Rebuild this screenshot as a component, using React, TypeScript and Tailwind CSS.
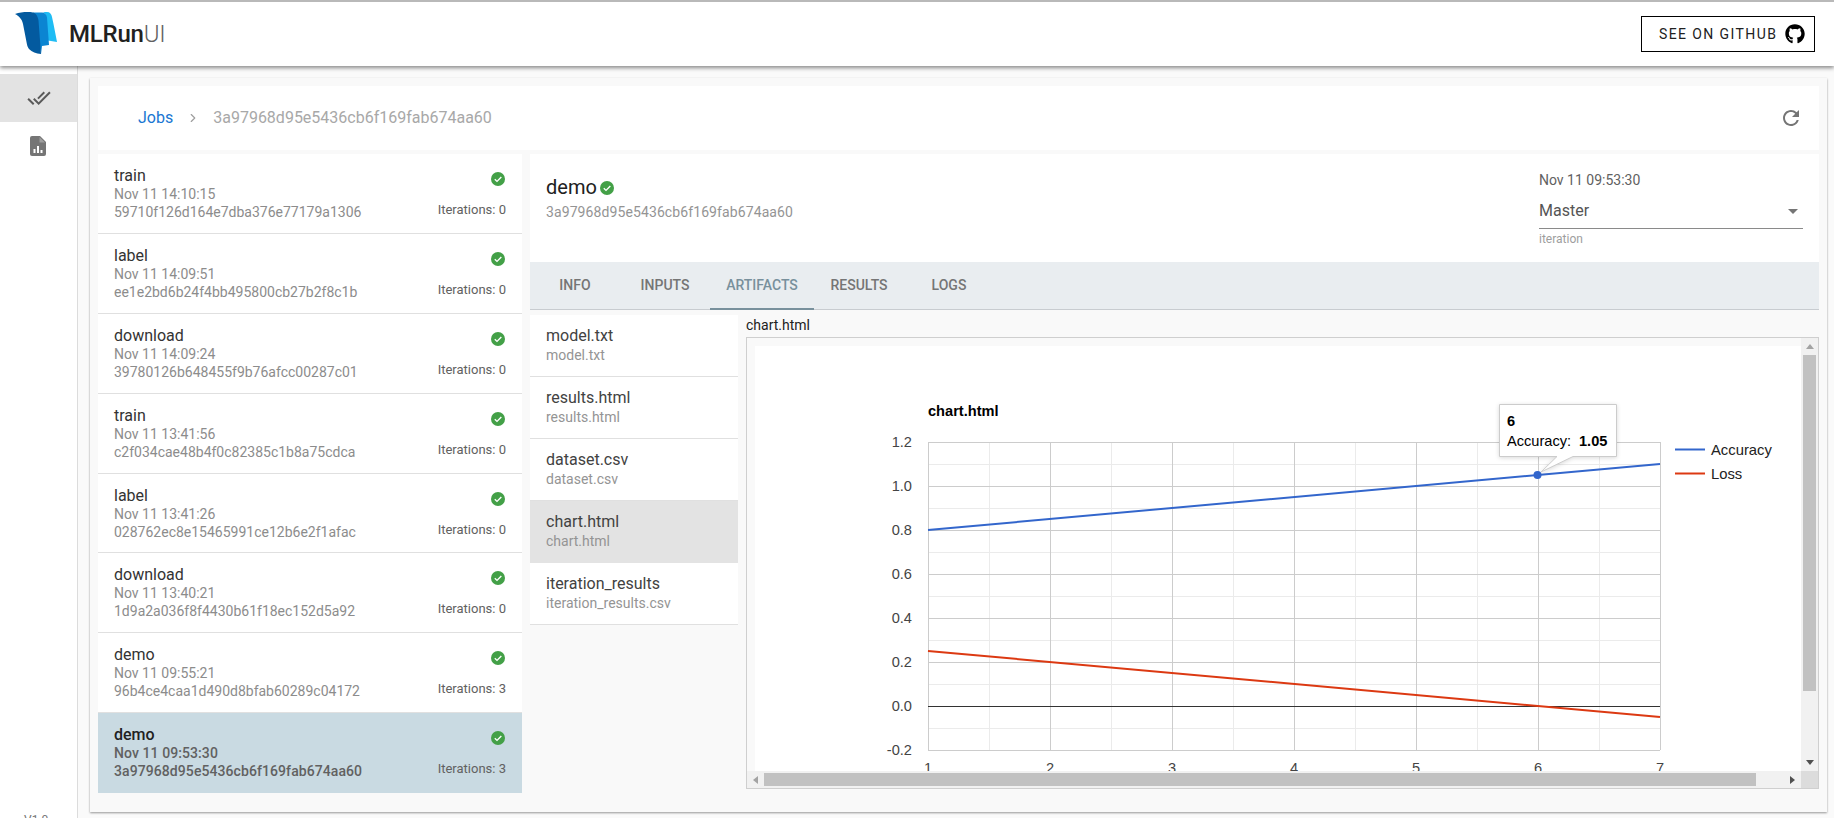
import { ChevronRight } from "lucide-react";
import { FaGithub } from "react-icons/fa";
import { MdDoneAll, MdRefresh } from "react-icons/md";

const JOBS = [
  { name: "train", date: "Nov 11 14:10:15", uid: "59710f126d164e7dba376e77179a1306", iter: 0 },
  { name: "label", date: "Nov 11 14:09:51", uid: "ee1e2bd6b24f4bb495800cb27b2f8c1b", iter: 0 },
  { name: "download", date: "Nov 11 14:09:24", uid: "39780126b648455f9b76afcc00287c01", iter: 0 },
  { name: "train", date: "Nov 11 13:41:56", uid: "c2f034cae48b4f0c82385c1b8a75cdca", iter: 0 },
  { name: "label", date: "Nov 11 13:41:26", uid: "028762ec8e15465991ce12b6e2f1afac", iter: 0 },
  { name: "download", date: "Nov 11 13:40:21", uid: "1d9a2a036f8f4430b61f18ec152d5a92", iter: 0 },
  { name: "demo", date: "Nov 11 09:55:21", uid: "96b4ce4caa1d490d8bfab60289c04172", iter: 3 },
  { name: "demo", date: "Nov 11 09:53:30", uid: "3a97968d95e5436cb6f169fab674aa60", iter: 3, active: true },
];

const ARTIFACTS = [
  { name: "model.txt", path: "model.txt" },
  { name: "results.html", path: "results.html" },
  { name: "dataset.csv", path: "dataset.csv" },
  { name: "chart.html", path: "chart.html", active: true },
  { name: "iteration_results", path: "iteration_results.csv" },
];

const TABS = [
  { label: "INFO", w: "w-[90px]" },
  { label: "INPUTS", w: "w-[90px]" },
  { label: "ARTIFACTS", w: "w-[104px]" },
  { label: "RESULTS", w: "w-[90px]" },
  { label: "LOGS", w: "w-[90px]" },
];

function StatusDot({ className }: { className?: string }) {
  return (
    <svg viewBox="0 0 24 24" className={className}>
      <circle cx="12" cy="12" r="12" fill="#43a047" />
      <path d="M6.5 12.5l3.8 3.6 7.4-7.4" fill="none" stroke="#fff" strokeWidth="2.4" />
    </svg>
  );
}

function Logo() {
  return (
    <svg viewBox="0 0 42 44" className="h-[44px] w-[42px] shrink-0">
      <path d="M28 0h4c3 0 4.500 2 5 5C39 14 40.500 22 42 30l-9-1.500L31 5c-.5-3-1.500-4.500-3-5z" fill="#1fbcf4" />
      <path d="M18 .5h9c3 0 4.500 2 5 5l2 27.500-7 1-1 8z" fill="#0b85d2" />
      <path d="M0 2C6 0 13-.5 18 .5c3 .8 5 4 5.500 8L26 42c-5-.5-9-2-12-5-1.500-2-2-4-2.500-7L8 12C7 7 4 4 0 2z" fill="#035a9f" />
    </svg>
  );
}

function ReportIcon() {
  return (
    <svg viewBox="0 0 16 20" className="-ml-px h-[20px] w-[16px]">
      <path d="M2 0h8l6 6v12a2 2 0 0 1-2 2H2a2 2 0 0 1-2-2V2a2 2 0 0 1 2-2z" fill="#757575" />
      <path d="M3.500 13h2v4h-2zM7 10h2v7H7zM10.500 14h2v3h-2z" fill="#fff" />
      <path d="M9.500 1v5.500H15z" fill="#9e9e9e" />
    </svg>
  );
}

const X_MAJOR = [928, 1050, 1172, 1294, 1416, 1538, 1660];
const X_MINOR = [989, 1111, 1233, 1355, 1477, 1599];
const Y_MAJOR = [442, 486, 530, 574, 618, 662, 750];
const Y_MINOR = [464, 508, 552, 596, 640, 684, 728];
const Y_LABELS = ["1.2", "1.0", "0.8", "0.6", "0.4", "0.2", "0.0", "-0.2"];

// viewBox uses page coordinates, the white iframe body starts at 755,346
function Chart() {
  return (
    <svg width="1046" height="425" viewBox="755 346 1046 425" className="block bg-white font-['Liberation_Sans',Arial,sans-serif]">
      <text x="928" y="416" fontSize="14.6" fontWeight="700" fill="#000">chart.html</text>
      {X_MINOR.map((x) => (
        <line key={x} x1={x + 0.5} x2={x + 0.5} y1="442" y2="750" stroke="#ebebeb" />
      ))}
      {Y_MINOR.map((y) => (
        <line key={y} x1="928" x2="1660" y1={y + 0.5} y2={y + 0.5} stroke="#ebebeb" />
      ))}
      {X_MAJOR.map((x) => (
        <line key={x} x1={x + 0.5} x2={x + 0.5} y1="442" y2="750" stroke="#cccccc" />
      ))}
      {Y_MAJOR.map((y) => (
        <line key={y} x1="928" x2="1660" y1={y + 0.5} y2={y + 0.5} stroke="#cccccc" />
      ))}
      <line x1="928" x2="1660" y1="706.5" y2="706.5" stroke="#333333" />
      {Y_LABELS.map((t, i) => (
        <text key={t} x="912" y={447 + i * 44} fontSize="14.6" textAnchor="end" fill="#444">{t}</text>
      ))}
      {X_MAJOR.map((x, i) => (
        <text key={x} x={x} y="773" fontSize="14.6" textAnchor="middle" fill="#444">{i + 1}</text>
      ))}
      <line x1="928" x2="1660" y1="530" y2="464" stroke="#3366cc" strokeWidth="2" />
      <line x1="928" x2="1660" y1="651" y2="717" stroke="#dc3912" strokeWidth="2" />
      <circle cx="1537.5" cy="475" r="4" fill="#3366cc" />
      <line x1="1675" x2="1705" y1="449.5" y2="449.5" stroke="#3366cc" strokeWidth="2" />
      <line x1="1675" x2="1705" y1="473.5" y2="473.5" stroke="#dc3912" strokeWidth="2" />
      <text x="1711" y="455" fontSize="14.8" fill="#222">Accuracy</text>
      <text x="1711" y="479" fontSize="14.8" fill="#222">Loss</text>
      <path d="M1499.5 404.5h117v52H1573L1541 472l16-15.500h-57.500z" fill="#fff" stroke="#cccccc" className="drop-shadow-sm" />
      <text x="1507" y="426" fontSize="14.6" fontWeight="700" fill="#000">6</text>
      <text x="1507" y="446" fontSize="14.6" fill="#000">Accuracy:</text>
      <text x="1579" y="446" fontSize="14.6" fontWeight="700" fill="#000">1.05</text>
    </svg>
  );
}

export default function App() {
  return (
    <div className="flex h-[818px] flex-col overflow-hidden bg-[#fafafa] font-['Roboto',sans-serif] text-[#333]">
      {/* header */}
      <header className="relative z-10 flex h-[66px] shrink-0 items-center justify-between border-t-2 border-[#b9b9b9] bg-white pl-[15px] pr-[19px] shadow-[0_2px_4px_rgba(0,0,0,0.45)]">
        <div className="flex items-center gap-[12px]">
          <Logo />
          <div className="text-[24px] font-medium tracking-[-0.2px] text-[#212121]">
            MLRun<span className="font-light text-[#616161]">UI</span>
          </div>
        </div>
        <button className="flex h-[36px] w-[174px] items-center gap-[8px] border border-black pl-[17px] text-[14px] tracking-[1.4px] text-[#212121]">
          SEE ON GITHUB
          <FaGithub className="h-[20px] w-[20px] text-black" />
        </button>
      </header>

      <div className="flex min-h-0 flex-1">
        {/* sidebar */}
        <aside className="flex w-[78px] shrink-0 flex-col border-r border-[#dcdcdc] bg-white pt-[8px]">
          <div className="flex h-[48px] items-center justify-center bg-[#e3e3e3]">
            <MdDoneAll className="h-[24px] w-[24px] text-[#5a5a5a]" />
          </div>
          <div className="flex h-[48px] items-center justify-center">
            <ReportIcon />
          </div>
          <div className="mt-auto translate-y-[11px] pl-[24px] text-[12px] text-[#757575]">V1.0</div>
        </aside>

        {/* main card */}
        <main className="min-w-0 flex-1 pl-[12px] pr-[7px] pt-[12px]">
          <div className="flex h-[734px] flex-col gap-[4px] bg-[#f9f9f9] p-[8px] shadow-[0_1px_2px_rgba(0,0,0,0.4)]">
            <div className="flex h-[64px] shrink-0 items-center justify-between bg-white pl-[40px] pr-[16px]">
              <div className="flex items-center text-[16px]">
                <span className="text-[#1976d2]">Jobs</span>
                <ChevronRight className="mx-[13px] h-[14px] w-[14px] text-[#9e9e9e]" />
                <span className="text-[#a8a8a8]">3a97968d95e5436cb6f169fab674aa60</span>
              </div>
              <MdRefresh className="h-[24px] w-[24px] text-[#757575]" />
            </div>

            <div className="flex min-h-0 flex-1 gap-[8px]">
              {/* jobs */}
              <div className="flex w-[424px] shrink-0 flex-col">
                {JOBS.map((job) => (
                  <div
                    key={job.uid}
                    className={
                      "flex h-[79.9px] shrink-0 justify-between border-b pl-[16px] pr-[16px] pt-[13px] " +
                      (job.active ? "border-transparent bg-[#c9dae2]" : "border-[#e0e0e0] bg-white")
                    }
                  >
                    <div className="min-w-0">
                      <div className={"text-[16px] leading-[18px] " + (job.active ? "font-medium text-[#212121]" : "")}>{job.name}</div>
                      <div className={"text-[14px] leading-[18px] " + (job.active ? "font-medium tracking-[0.08px] text-[#616161]" : "text-[#8c8c8c]")}>{job.date}</div>
                      <div className={"text-[14px] leading-[18px] " + (job.active ? "font-medium tracking-[0.08px] text-[#616161]" : "text-[#8c8c8c]")}>{job.uid}</div>
                    </div>
                    <div className="flex flex-col items-end pt-[5px]">
                      <StatusDot className="mr-[1px] h-[14px] w-[14px]" />
                      <div className="mt-[16px] text-[13px] leading-[16px] text-[#616161]">Iterations: {job.iter}</div>
                    </div>
                  </div>
                ))}
              </div>

              {/* detail */}
              <div className="flex min-w-0 flex-1 flex-col">
                <div className="flex h-[108px] shrink-0 justify-between bg-white pl-[16px] pr-[16px]">
                  <div className="pt-[21px]">
                    <div className="flex items-center gap-[3px] text-[20px] font-normal leading-[24px] text-[#212121]">
                      demo
                      <StatusDot className="mt-[1px] h-[14px] w-[14px]" />
                    </div>
                    <div className="mt-[3px] text-[14px] tracking-[0.1px] text-[#949494]">3a97968d95e5436cb6f169fab674aa60</div>
                  </div>
                  <div className="w-[264px] pt-[17px]">
                    <div className="text-[14px] leading-[18px] text-[#616161]">Nov 11 09:53:30</div>
                    <div className="mt-[10px] box-content flex h-[24px] items-center justify-between border-b border-[#8a8a8a] pb-[5px] text-[16px] text-[#555]">
                      Master
                      <span className="mr-[5px] h-0 w-0 border-x-[5px] border-t-[5px] border-x-transparent border-t-[#757575]" />
                    </div>
                    <div className="mt-[1px] text-[12px] leading-[18px] text-[#9e9e9e]">iteration</div>
                  </div>
                </div>

                <div className="flex h-[48px] shrink-0 border-b border-[#c8ccd0] bg-[#e9edf0]">
                  {TABS.map((t) => (
                    <div
                      key={t.label}
                      className={
                        "flex items-center justify-center text-[14px] font-medium " +
                        t.w +
                        (t.label === "ARTIFACTS" ? " -mb-px border-b-2 border-[#78909c] text-[#78909c]" : " text-[#757575]")
                      }
                    >
                      {t.label}
                    </div>
                  ))}
                </div>

                <div className="flex min-h-0 flex-1 gap-[8px] pt-[5px]">
                  <div className="w-[208px] shrink-0">
                    {ARTIFACTS.map((a) => (
                      <div
                        key={a.name}
                        className={
                          "h-[62px] border-b pl-[16px] pt-[11px] " +
                          (a.active ? "border-transparent bg-[#e3e3e3]" : "border-[#e0e0e0] bg-white")
                        }
                      >
                        <div className="text-[16px] leading-[20px] text-[#424242]">{a.name}</div>
                        <div className="text-[14px] leading-[18px] text-[#949494]">{a.path}</div>
                      </div>
                    ))}
                  </div>

                  <div className="flex min-w-0 flex-1 flex-col">
                    <div className="h-[22px] shrink-0 text-[14px] leading-[20px] text-[#212121]">chart.html</div>
                    <div className="flex h-[452px] flex-col border border-[#cfcfcf]">
                      <div className="flex min-h-0 flex-1">
                        <div className="min-w-0 flex-1 overflow-hidden pl-[8px] pt-[8px]">
                          <Chart />
                        </div>
                        <div className="flex w-[17px] shrink-0 flex-col items-center bg-[#f1f1f1] px-[2px]">
                          <div className="flex h-[17px] shrink-0 items-center justify-center">
                            <span className="h-0 w-0 border-x-[4px] border-b-[5px] border-x-transparent border-b-[#a3a3a3]" />
                          </div>
                          <div className="h-[336px] w-full bg-[#c1c1c1]" />
                          <div className="mt-auto flex h-[17px] shrink-0 items-center justify-center">
                            <span className="h-0 w-0 border-x-[4px] border-t-[5px] border-x-transparent border-t-[#505050]" />
                          </div>
                        </div>
                      </div>
                      <div className="flex h-[17px] shrink-0 items-center bg-[#f1f1f1]">
                        <div className="flex w-[17px] justify-center">
                          <span className="h-0 w-0 border-y-[4px] border-r-[5px] border-y-transparent border-r-[#a3a3a3]" />
                        </div>
                        <div className="h-[13px] w-[992px] bg-[#c1c1c1]" />
                        <div className="ml-auto flex w-[17px] justify-center">
                          <span className="h-0 w-0 border-y-[4px] border-l-[5px] border-y-transparent border-l-[#505050]" />
                        </div>
                        <div className="h-full w-[17px] bg-[#dcdcdc]" />
                      </div>
                    </div>
                  </div>
                </div>
              </div>
            </div>
          </div>
        </main>
      </div>
    </div>
  );
}
